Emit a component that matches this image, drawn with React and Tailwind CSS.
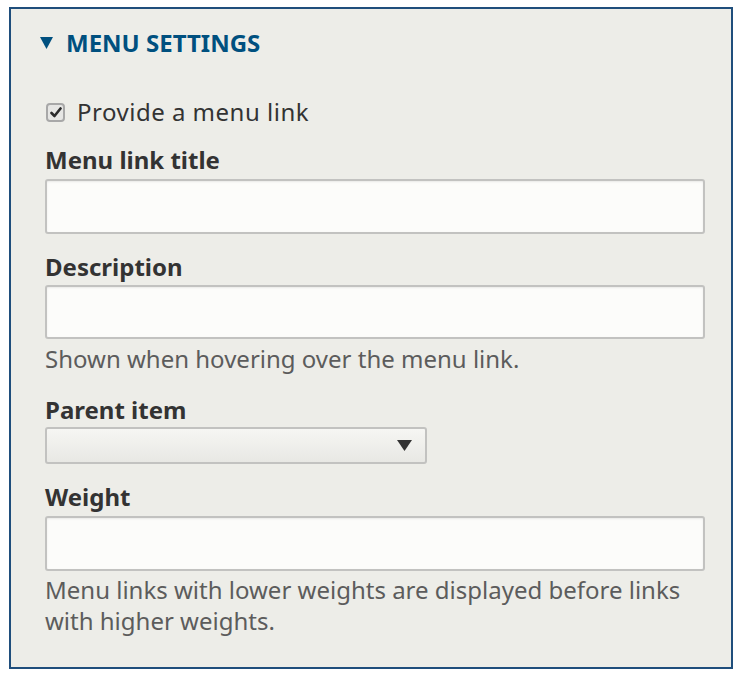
// Menu settings fieldset
function Label({ children, className = '' }) {
  return (
    <div className={`text-[24px] leading-[30px] font-bold text-[#333333] ${className}`}>
      {children}
    </div>
  );
}

function TextInput({ className = '' }) {
  return (
    <div
      className={`w-[660px] rounded-[3px] border-2 border-[#c2c2c0] bg-[#fcfcfa] shadow-[inset_0_1px_2px_rgba(0,0,0,0.08)] ${className}`}
    />
  );
}

function Help({ children, className = '' }) {
  return (
    <div className={`text-[24px] leading-[31px] text-[#5c5c5c] ${className}`}>
      {children}
    </div>
  );
}

export default function App() {
  return (
    <div className="bg-white min-h-screen pt-[7px] pl-[9px]" style={{ fontFamily: '"Noto Sans", "Open Sans", sans-serif' }}>
      <div className="w-[724px] h-[662px] border-2 border-[#1f4e7c] bg-[#edede8] pt-[19px] pl-[34px]">
        {/* Header */}
        <div className="flex items-center h-[30px] -ml-[5px]">
          <svg width="13" height="12" viewBox="0 0 13 12" className="mr-[13px]">
            <polygon points="0,0 13,0 6.5,12" fill="#00507f" />
          </svg>
          <span className="text-[24px] font-bold text-[#00507f] leading-[30px]">MENU SETTINGS</span>
        </div>

        {/* Checkbox */}
        <div className="flex items-center h-[30px] mt-[39px]">
          <span className="shrink-0 w-[19px] h-[19px] ml-[1px] rounded-[4px] border-2 border-[#a8a8a8] bg-[#e6e6e4] flex items-center justify-center">
            <svg width="12" height="11" viewBox="0 0 12 11">
              <path d="M1.5 6 L4.5 9 L10.5 1.5" stroke="#2b2b2b" strokeWidth="2.6" fill="none" strokeLinecap="round" strokeLinejoin="round" />
            </svg>
          </span>
          <span className="ml-[12px] text-[24px] leading-[30px] tracking-[0.5px] text-[#333333]">Provide a menu link</span>
        </div>

        <Label className="mt-[18px]">Menu link title</Label>
        <TextInput className="h-[55px] mt-[4px]" />

        <Label className="mt-[18px]">Description</Label>
        <TextInput className="h-[54px] mt-[3px]" />
        <Help className="mt-[4px]">Shown when hovering over the menu link.</Help>

        <Label className="mt-[21px]">Parent item</Label>
        <div className="w-[382px] h-[37px] mt-[2px] rounded-[3px] border-2 border-[#c2c2c0] bg-gradient-to-b from-[#f6f6f3] to-[#e8e8e4] flex items-center justify-end pr-[13px]">
          <svg width="15" height="11" viewBox="0 0 15 11">
            <polygon points="0,0 15,0 7.5,11" fill="#333333" />
          </svg>
        </div>

        <Label className="mt-[18px]">Weight</Label>
        <TextInput className="h-[55px] mt-[4px]" />
        <Help className="mt-[3px] w-[660px]">
          Menu links with lower weights are displayed before links with higher weights.
        </Help>
      </div>
    </div>
  );
}
